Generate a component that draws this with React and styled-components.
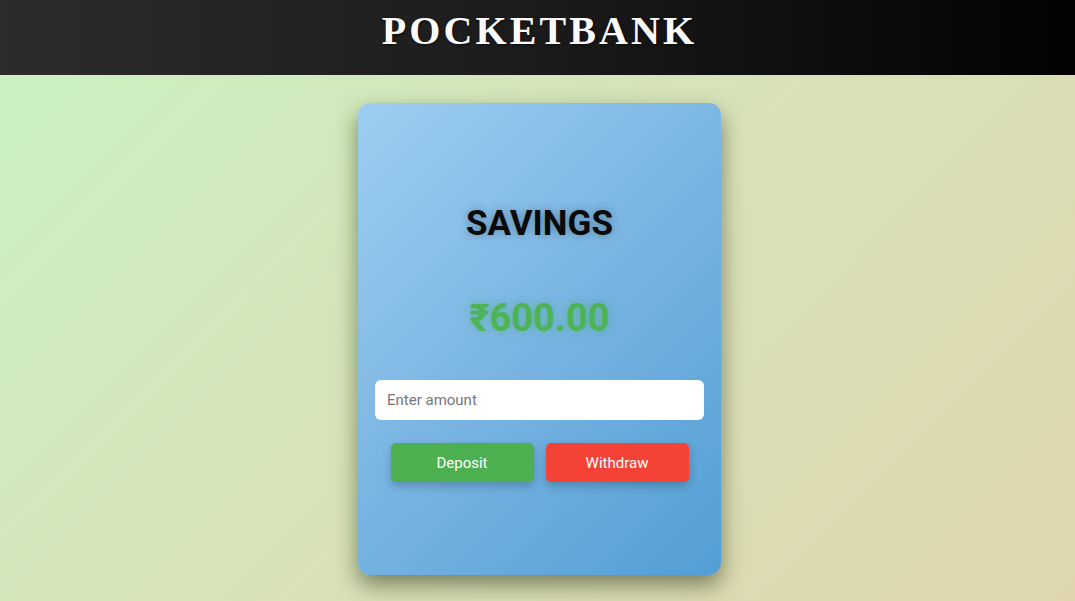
import React, { useState } from 'react';
import styled, { createGlobalStyle } from 'styled-components';

const GlobalStyle = createGlobalStyle`
    * { box-sizing: border-box; }
    html, body {
        margin: 0;
        padding: 0;
        height: 100%;
    }
    body {
        font-family: Roboto, "Liberation Sans", sans-serif;
        background: linear-gradient(135deg, #c9f2c2 0%, #d8e2b8 50%, #dfd6ae 100%);
        min-height: 601px;
    }
`;

const Page = styled.div`
    min-height: 601px;
    display: flex;
    flex-direction: column;
`;

const Header = styled.header`
    height: 75px;
    padding-bottom: 13px;
    background: linear-gradient(90deg, #2c2c2c 0%, #1b1b1b 50%, #020202 100%);
    display: flex;
    align-items: center;
    justify-content: center;
`;

const Title = styled.h1`
    margin: 0;
    padding-left: 4px;
    font-family: "Liberation Serif", "DejaVu Serif", serif;
    font-weight: bold;
    font-size: 40px;
    line-height: 46px;
    letter-spacing: 3.1px;
    color: #fafafa;
    text-shadow: 1px 1px 3px rgba(0, 0, 0, 0.6);
`;

const Main = styled.main`
    display: flex;
    justify-content: center;
    padding: 28px 0 0 4px;
`;

const Card = styled.div`
    width: 363px;
    height: 472px;
    padding: 101px 17px 0;
    border-radius: 12px;
    background: linear-gradient(135deg, #9ecdf0 0%, #78b4e2 50%, #529ed5 100%);
    box-shadow: 0 10px 22px rgba(40, 50, 20, 0.55);
    display: flex;
    flex-direction: column;
    align-items: center;
`;

const Heading = styled.h2`
    margin: 0;
    font-size: 35px;
    line-height: 40px;
    font-weight: 700;
    color: #0a0a0a;
    text-shadow: 0 0 8px rgba(0, 0, 0, 0.3);
`;

const Balance = styled.div`
    margin-top: 51px;
    font-size: 38px;
    line-height: 46px;
    font-weight: 700;
    color: #4cb454;
    text-shadow: 0 0 8px rgba(60, 170, 70, 0.45);
`;

const Input = styled.input`
    margin-top: 39px;
    width: 100%;
    height: 40px;
    padding: 0 12px;
    border: none;
    border-radius: 6px;
    background: #fff;
    font-family: Roboto, "Liberation Sans", sans-serif;
    font-size: 15px;
    color: #333;
    outline: none;

    &::placeholder {
        color: #777;
    }
`;

const Actions = styled.div`
    margin-top: 23px;
    display: flex;
    gap: 12px;
`;

const Button = styled.button`
    width: 143px;
    height: 39px;
    border: none;
    border-radius: 5px;
    background: ${props => props.color};
    color: #fff;
    font-family: Roboto, "Liberation Sans", sans-serif;
    font-size: 15px;
    box-shadow: 0 4px 10px rgba(0, 0, 0, 0.22);
    cursor: pointer;
`;

export default function App() {
    const [balance, setBalance] = useState(600);
    const [amount, setAmount] = useState('');

    const change = sign => {
        const value = parseFloat(amount);
        if (!value || value <= 0) return;
        if (sign < 0 && value > balance) return;
        setBalance(balance + sign * value);
        setAmount('');
    };

    return <Page>
        <GlobalStyle />
        <Header>
            <Title>POCKETBANK</Title>
        </Header>
        <Main>
            <Card>
                <Heading>SAVINGS</Heading>
                <Balance>₹{balance.toFixed(2)}</Balance>
                <Input
                    type="number"
                    placeholder="Enter amount"
                    value={amount}
                    onChange={e => setAmount(e.target.value)} />
                <Actions>
                    <Button color="#4caf50" onClick={() => change(1)}>Deposit</Button>
                    <Button color="#f44336" onClick={() => change(-1)}>Withdraw</Button>
                </Actions>
            </Card>
        </Main>
    </Page>;
}
